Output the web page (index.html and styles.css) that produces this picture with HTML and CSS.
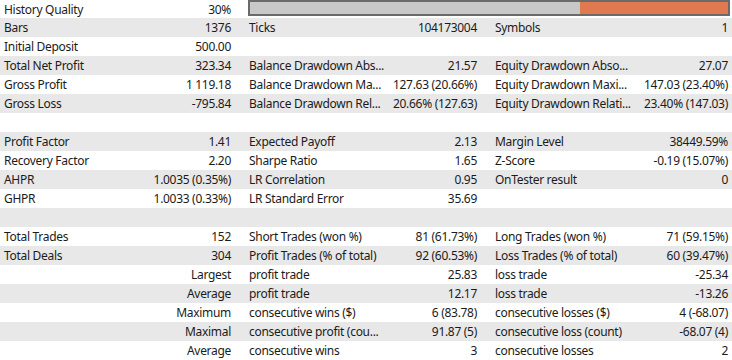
FILE: index.html
```html
<!DOCTYPE html>
<html>
<head>
<meta charset="utf-8">
<link rel="stylesheet" href="styles.css">
</head>
<body>
<div class="report">
  <div class="row first">
    <div class="cell"><span>History Quality</span><span>30%</span></div>
    <div class="bar"><div class="bar-fill" style="width:69%"></div></div>
  </div>
  <div class="row alt">
    <div class="cell"><span>Bars</span><span>1376</span></div>
    <div class="cell"><span>Ticks</span><span>104173004</span></div>
    <div class="cell"><span>Symbols</span><span>1</span></div>
  </div>
  <div class="row">
    <div class="cell"><span>Initial Deposit</span><span>500.00</span></div>
    <div class="cell"></div>
    <div class="cell"></div>
  </div>
  <div class="row alt">
    <div class="cell"><span>Total Net Profit</span><span>323.34</span></div>
    <div class="cell"><span>Balance Drawdown Abs...</span><span>21.57</span></div>
    <div class="cell"><span>Equity Drawdown Abso...</span><span>27.07</span></div>
  </div>
  <div class="row">
    <div class="cell"><span>Gross Profit</span><span>1 119.18</span></div>
    <div class="cell"><span>Balance Drawdown Ma...</span><span>127.63 (20.66%)</span></div>
    <div class="cell"><span>Equity Drawdown Maxi...</span><span>147.03 (23.40%)</span></div>
  </div>
  <div class="row alt">
    <div class="cell"><span>Gross Loss</span><span>-795.84</span></div>
    <div class="cell"><span>Balance Drawdown Rel...</span><span>20.66% (127.63)</span></div>
    <div class="cell"><span>Equity Drawdown Relati...</span><span>23.40% (147.03)</span></div>
  </div>
  <div class="row"></div>
  <div class="row alt">
    <div class="cell"><span>Profit Factor</span><span>1.41</span></div>
    <div class="cell"><span>Expected Payoff</span><span>2.13</span></div>
    <div class="cell"><span>Margin Level</span><span>38449.59%</span></div>
  </div>
  <div class="row">
    <div class="cell"><span>Recovery Factor</span><span>2.20</span></div>
    <div class="cell"><span>Sharpe Ratio</span><span>1.65</span></div>
    <div class="cell"><span>Z-Score</span><span>-0.19 (15.07%)</span></div>
  </div>
  <div class="row alt">
    <div class="cell"><span>AHPR</span><span>1.0035 (0.35%)</span></div>
    <div class="cell"><span>LR Correlation</span><span>0.95</span></div>
    <div class="cell"><span>OnTester result</span><span>0</span></div>
  </div>
  <div class="row">
    <div class="cell"><span>GHPR</span><span>1.0033 (0.33%)</span></div>
    <div class="cell"><span>LR Standard Error</span><span>35.69</span></div>
    <div class="cell"></div>
  </div>
  <div class="row alt"></div>
  <div class="row">
    <div class="cell"><span>Total Trades</span><span>152</span></div>
    <div class="cell"><span>Short Trades (won %)</span><span>81 (61.73%)</span></div>
    <div class="cell"><span>Long Trades (won %)</span><span>71 (59.15%)</span></div>
  </div>
  <div class="row alt">
    <div class="cell"><span>Total Deals</span><span>304</span></div>
    <div class="cell"><span>Profit Trades (% of total)</span><span>92 (60.53%)</span></div>
    <div class="cell"><span>Loss Trades (% of total)</span><span>60 (39.47%)</span></div>
  </div>
  <div class="row">
    <div class="cell"><span></span><span>Largest</span></div>
    <div class="cell"><span>profit trade</span><span>25.83</span></div>
    <div class="cell"><span>loss trade</span><span>-25.34</span></div>
  </div>
  <div class="row alt">
    <div class="cell"><span></span><span>Average</span></div>
    <div class="cell"><span>profit trade</span><span>12.17</span></div>
    <div class="cell"><span>loss trade</span><span>-13.26</span></div>
  </div>
  <div class="row">
    <div class="cell"><span></span><span>Maximum</span></div>
    <div class="cell"><span>consecutive wins ($)</span><span>6 (83.78)</span></div>
    <div class="cell"><span>consecutive losses ($)</span><span>4 (-68.07)</span></div>
  </div>
  <div class="row alt">
    <div class="cell"><span></span><span>Maximal</span></div>
    <div class="cell"><span>consecutive profit (cou...</span><span>91.87 (5)</span></div>
    <div class="cell"><span>consecutive loss (count)</span><span>-68.07 (4)</span></div>
  </div>
  <div class="row">
    <div class="cell"><span></span><span>Average</span></div>
    <div class="cell"><span>consecutive wins</span><span>3</span></div>
    <div class="cell"><span>consecutive losses</span><span>2</span></div>
  </div>
</div>
</body>
</html>
```

FILE: styles.css
```css
* { box-sizing: border-box; }
html, body {
  margin: 0;
  padding: 0;
  background: #ffffff;
}
body {
  font-family: "Noto Sans", "Open Sans", sans-serif;
  font-size: 12px;
  letter-spacing: -0.3px;
  color: #1b1b1b;
  width: 732px;
  height: 360px;
  overflow: hidden;
}
.report {
  display: flex;
  flex-direction: column;
}
.row {
  display: grid;
  grid-template-columns: 227px 228px 233px;
  column-gap: 18px;
  padding: 0 4px;
  height: 19px;
  align-items: center;
  white-space: nowrap;
}
.row.first {
  height: 18px;
}
.row.alt {
  background: #e8e8e8;
}
.cell {
  display: flex;
  justify-content: space-between;
  line-height: 19px;
}
.bar {
  grid-column: 2 / 4;
  margin-left: -1px;
  margin-right: -2px;
  height: 16px;
  align-self: start;
  border: 2px solid #6a6a6a;
  background: #e07850;
  display: flex;
}
.bar-fill {
  background: #c8c8c8;
  height: 100%;
  flex: 0 0 auto;
}
```
